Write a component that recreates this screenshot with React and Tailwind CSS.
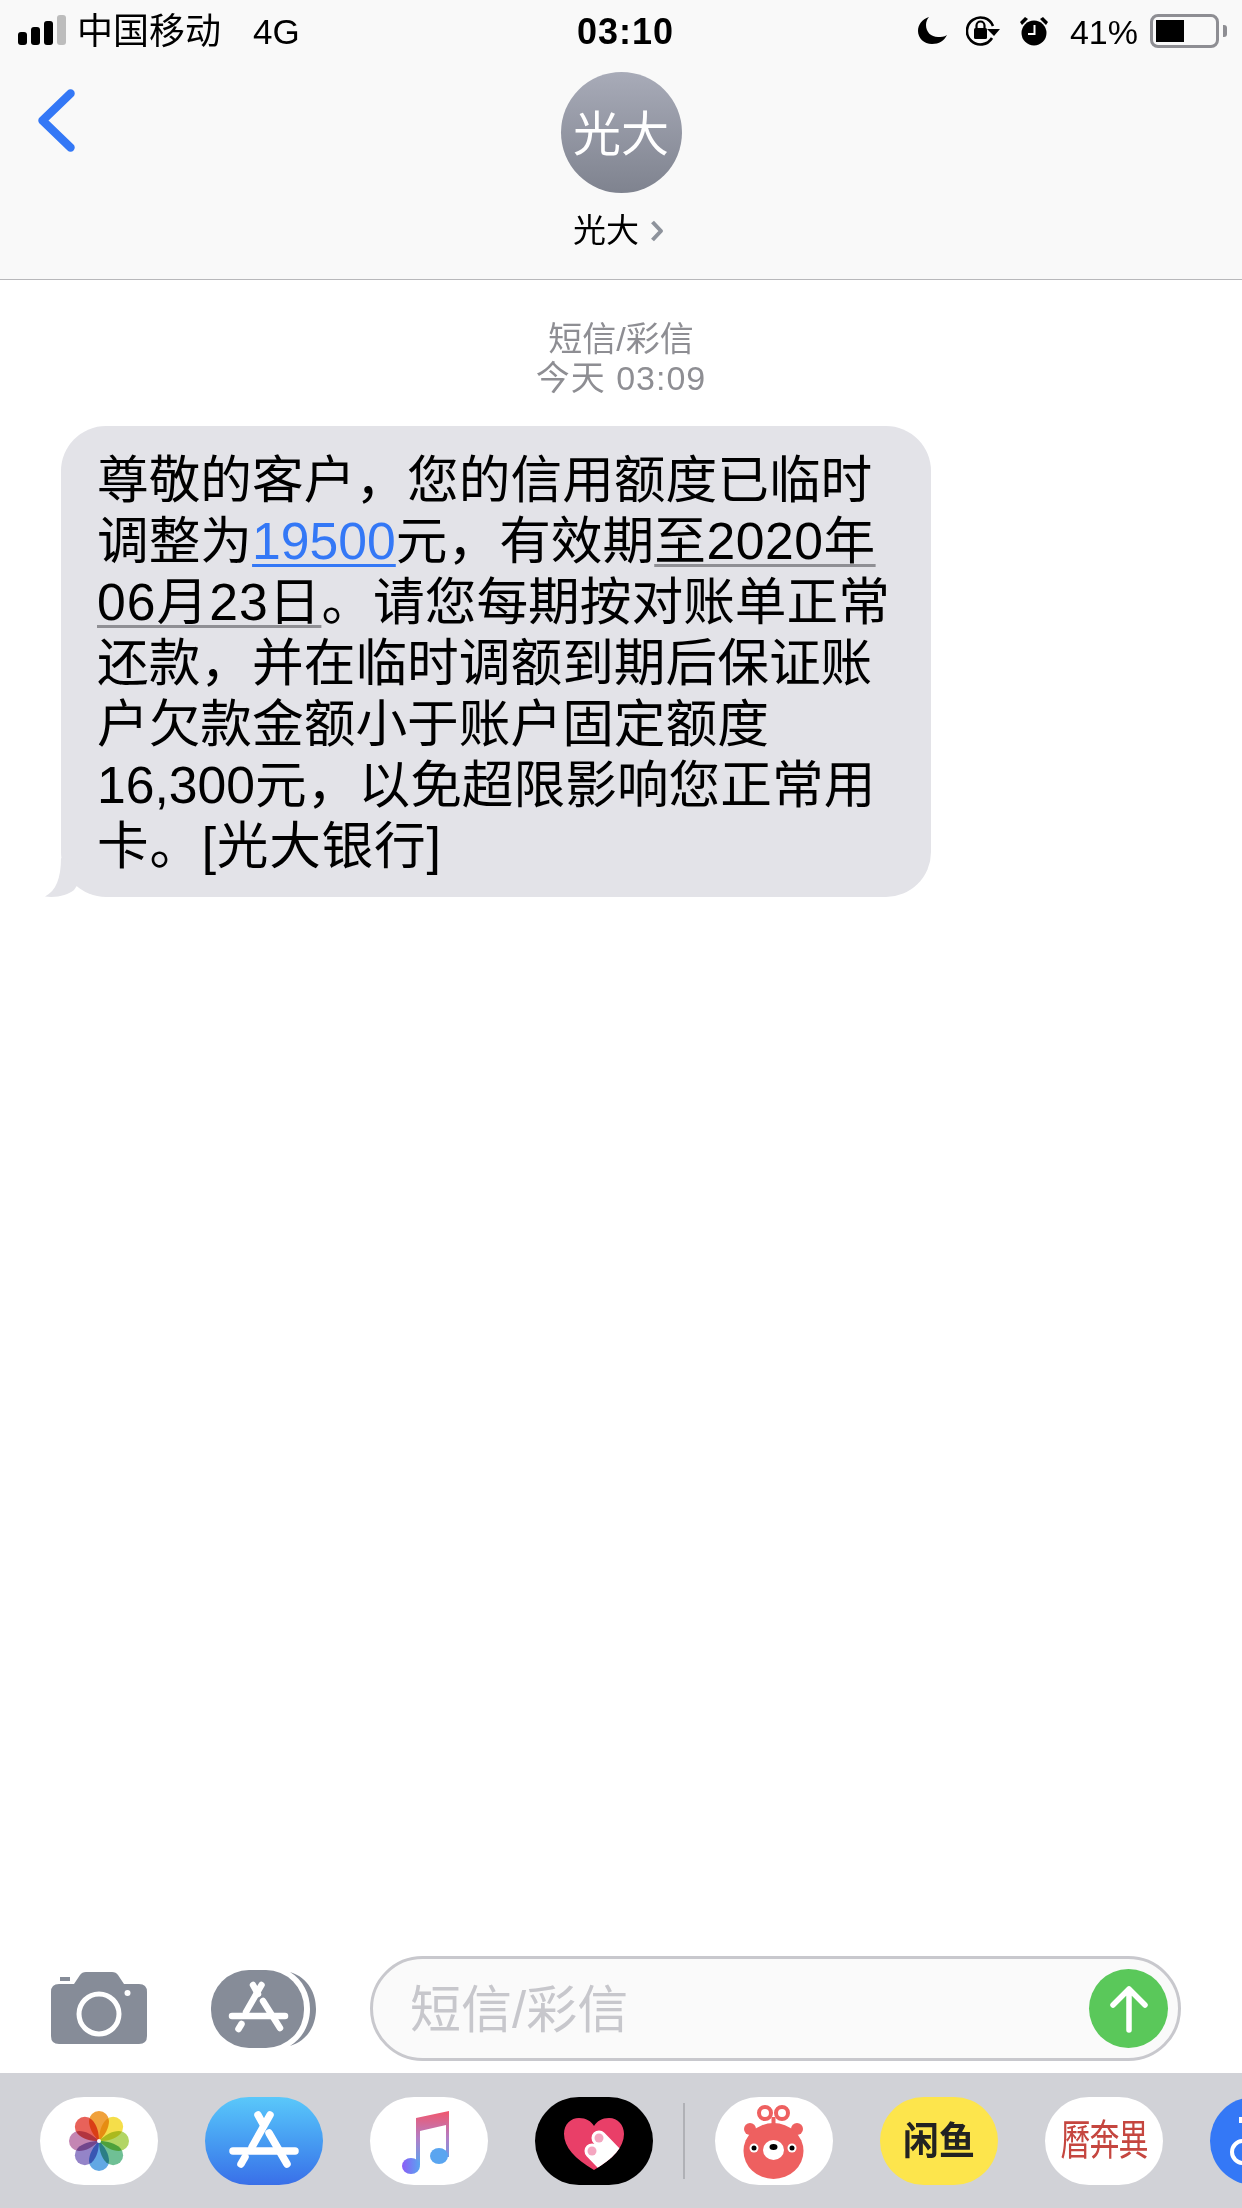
import React from "react";

const FONT = "font-['Liberation_Sans','Noto_Sans_CJK_SC',sans-serif]";
const UNDERLINE = "underline decoration-[3px] underline-offset-[5px]";

const SignalBars = () => (
  <div className="flex items-end gap-[4px] h-[30px]">
    <div className="w-[9px] h-[13px] rounded-[3px] bg-black" />
    <div className="w-[9px] h-[18px] rounded-[3px] bg-black" />
    <div className="w-[9px] h-[24px] rounded-[3px] bg-black" />
    <div className="w-[9px] h-[30px] rounded-[3px] bg-[#bdbdbd]" />
  </div>
);

const MoonIcon = () => (
  <svg width="29" height="27" viewBox="0 0 29 27">
    <path d="M11 0 C4 2 0 8 0 14 C0 21 6 27 14 27 C21 27 26 24 29 18 C26 20 23 20 20 20 C13 20 8 15 8 8 C8 5 9 2 11 0 Z" fill="#000" />
  </svg>
);

const RotationLockIcon = () => (
  <svg width="34" height="30" viewBox="0 0 34 30">
    <path d="M26 22 A13.5 13.5 0 1 1 27 10" fill="none" stroke="#000" strokeWidth="2.6" />
    <path d="M21 13 H34 L28 20 Z" fill="#000" />
    <rect x="8" y="12" width="13" height="11" rx="1.5" fill="#000" />
    <path d="M10.5 12 V9.5 A4 4 0 0 1 18.5 9.5 V12" fill="none" stroke="#000" strokeWidth="2.2" />
  </svg>
);

const AlarmIcon = () => (
  <svg width="30" height="30" viewBox="0 0 30 30">
    <circle cx="15" cy="17" r="12.5" fill="#000" />
    <path d="M1 6 L6 1 L9 3 L3 9 Z M29 6 L24 1 L21 3 L27 9 Z" fill="#000" />
    <path d="M15.5 9 V18 H9" fill="none" stroke="#fff" strokeWidth="2" />
  </svg>
);

const Battery = () => (
  <div className="flex items-center">
    <div className="w-[69px] h-[34px] rounded-[8px] border-[3px] border-[#8e8e93] p-[3px]">
      <div className="w-[28px] h-full bg-black" />
    </div>
    <div className="w-[4px] h-[12px] ml-[4px] rounded-r-[3px] bg-[#8e8e93]" />
  </div>
);

const StatusBar = () => (
  <div className="grid grid-cols-[577px_98px_1fr] items-center h-[60px] text-black">
    <div className="flex items-center pl-[18px]">
      <SignalBars />
      <span className="ml-[11px] pt-[3px] text-[36px] leading-[40px]">中国移动</span>
      <span className="ml-[32px] pt-[3px] text-[35px] leading-[40px]">4G</span>
    </div>
    <div className="pt-[3px] text-[36px] leading-[40px] font-bold tracking-[1px] whitespace-nowrap">03:10</div>
    <div className="flex items-center justify-end pt-[1px] pr-[15px]">
      <MoonIcon />
      <div className="ml-[19px] flex"><RotationLockIcon /></div>
      <div className="ml-[19px] flex"><AlarmIcon /></div>
      <span className="ml-[21px] pt-[2px] text-[34px] leading-[40px]">41%</span>
      <div className="ml-[12px]"><Battery /></div>
    </div>
  </div>
);

const Header = () => (
  <header className="h-[280px] bg-[#f9f9f9] border-b border-[#b8b8bb]">
    <StatusBar />
    <div className="grid grid-cols-[1fr_auto_1fr]">
      <svg className="mt-[29px] ml-[38px]" width="37" height="63" viewBox="0 0 37 63">
        <path d="M32.5 4.5 L4.5 31.5 L32.5 58.5" fill="none" stroke="#3478f6" strokeWidth="8.5" strokeLinecap="round" strokeLinejoin="round" />
      </svg>
      <div className="flex flex-col items-center pt-[12px]">
        <div className="w-[121px] h-[121px] pt-[4px] rounded-full bg-gradient-to-b from-[#a8abb8] to-[#7f838f] flex items-center justify-center text-white text-[48px] leading-none">
          光大
        </div>
        <div className="mt-[18px] mr-[5px] flex items-center text-[33px] leading-[40px] text-black">
          光大
          <svg className="ml-[11px]" width="14" height="22" viewBox="0 0 14 22">
            <path d="M2.5 2 L11 11 L2.5 20" fill="none" stroke="#8e939c" strokeWidth="4" strokeLinejoin="round" />
          </svg>
        </div>
      </div>
      <div />
    </div>
  </header>
);

const MessageBubble = () => (
  <div className="relative ml-[61px] w-[870px] rounded-[45px] bg-[#e3e3e8] pt-[24px] pb-[20px] pl-[36px] text-[51.7px] leading-[61px] text-black whitespace-nowrap">
    <svg className="absolute left-[-16px] bottom-[-1px]" width="50" height="40" viewBox="0 0 50 40">
      <path d="M16 0 C16 20 11 33 0 38.5 C12 40 23 37 29 32 L44 10 Z" fill="#e3e3e8" />
    </svg>
    <div className="relative">尊敬的客户，您的信用额度已临时</div>
    <div className="relative">
      调整为
      <span className={`text-[#3478f6] decoration-[#3478f6] ${UNDERLINE}`}>19500</span>
      元，有效期
      <span className={`tracking-[0.5px] decoration-[#8f8f94] ${UNDERLINE}`}>至2020年</span>
    </div>
    <div className="relative">
      <span className={`tracking-[1px] decoration-[#8f8f94] ${UNDERLINE}`}>06月23日</span>
      。请您每期按对账单正常
    </div>
    <div className="relative">还款，并在临时调额到期后保证账</div>
    <div className="relative">户欠款金额小于账户固定额度</div>
    <div className="relative">16,300元，以免超限影响您正常用</div>
    <div className="relative tracking-[0.7px]">卡。[光大银行]</div>
  </div>
);

const Conversation = () => (
  <main className="flex-1 pt-[40px] bg-white">
    <div className="mb-[28px] text-center text-[34px] leading-[39px] text-[#8e8e93]">
      <div>短信/彩信</div>
      <div className="tracking-[1px]">今天 03:09</div>
    </div>
    <MessageBubble />
  </main>
);

const CameraIcon = () => (
  <svg className="-mt-[2px]" width="96" height="72" viewBox="0 0 96 72">
    <path d="M8 12 H23 L29 3 Q31 0 35 0 H61 Q65 0 67 3 L73 12 H88 Q96 12 96 20 V64 Q96 72 88 72 H8 Q0 72 0 64 V20 Q0 12 8 12 Z" fill="#868c98" />
    <rect x="9" y="5" width="10" height="4" fill="#868c98" />
    <circle cx="48" cy="42" r="20" fill="none" stroke="#fff" strokeWidth="5" />
    <circle cx="76.5" cy="21" r="3" fill="#fff" />
  </svg>
);

const AppsIcon = () => (
  <svg width="105" height="78" viewBox="0 0 105 78">
    <rect x="0" y="0" width="93" height="78" rx="38" fill="#868c98" />
    <path d="M79 2 C98 8 105 24 105 39 C105 54 98 70 79 76 C92 68 99 54 99 39 C99 24 92 10 79 2 Z" fill="#868c98" />
    <g fill="none" stroke="#fff" strokeWidth="6.5" strokeLinecap="round">
      <path d="M50.5 15 L35 42" />
      <path d="M30.5 54 L27.5 59" />
      <path d="M42 15 L47 24" />
      <path d="M52 31 L69 58" />
      <path d="M21 46 H74" />
    </g>
  </svg>
);

const SendButton = () => (
  <div className="w-[79px] h-[79px] rounded-full bg-[#5ac85a] flex items-center justify-center">
    <svg width="42" height="50" viewBox="0 0 42 50">
      <path d="M21 46 V5 M5 21 L21 5 L37 21" fill="none" stroke="#fff" strokeWidth="5.5" strokeLinecap="round" strokeLinejoin="round" />
    </svg>
  </div>
);

const Composer = () => (
  <div className="flex items-center h-[105px] mb-[12px] pl-[51px]">
    <CameraIcon />
    <div className="ml-[64px] flex"><AppsIcon /></div>
    <div className="ml-[54px] w-[811px] h-[105px] rounded-full border-[3px] border-[#c8c8cd] bg-[#fafafa] flex items-center justify-between pl-[37px] pr-[10px]">
      <span className="pt-[5px] text-[51px] leading-[60px] text-[#c7c7cc]">短信/彩信</span>
      <SendButton />
    </div>
  </div>
);

// Dock tiles share the same stretched squircle
const Tile = ({ className = "", children }) => (
  <div className={`shrink-0 w-[118px] h-[88px] rounded-[44px] overflow-hidden flex items-center justify-center ${className}`}>
    {children}
  </div>
);

const PETALS = [
  ["#f0a13c", 0],
  ["#f5de4a", 45],
  ["#b2d565", 90],
  ["#6fc095", 135],
  ["#62a8e4", 180],
  ["#9484c8", 225],
  ["#c486b3", 270],
  ["#e8625a", 315],
];

const PhotosGlyph = () => (
  <svg width="118" height="88" viewBox="0 0 118 88">
    <g transform="translate(59 44)">
      {PETALS.map(([color, angle]) => (
        <path
          key={angle}
          className="mix-blend-multiply"
          d="M0 0 C-6 -6 -10 -13 -10 -20 A10 10 0 0 1 10 -20 C10 -13 6 -6 0 0 Z"
          fill={color}
          transform={`rotate(${angle})`}
        />
      ))}
      <circle r="2" fill="#fff" />
    </g>
  </svg>
);

const AppStoreGlyph = () => (
  <svg width="118" height="88" viewBox="0 0 118 88">
    <g fill="none" stroke="#fff" strokeWidth="7.5" strokeLinecap="round">
      <path d="M65 18 L47 50" />
      <path d="M40 60 L36 67" />
      <path d="M53 18 L58 27" />
      <path d="M64 36 L82 67" />
      <path d="M28 54 H90" />
    </g>
  </svg>
);

const MusicGlyph = () => (
  <svg width="118" height="88" viewBox="0 0 118 88">
    <defs>
      <linearGradient id="musicFill" x1="0" y1="0" x2="0" y2="1">
        <stop offset="0" stopColor="#f2566c" />
        <stop offset="0.5" stopColor="#b27ec6" />
        <stop offset="1" stopColor="#5aa5f0" />
      </linearGradient>
      <linearGradient id="noteFill" x1="0" y1="0" x2="1" y2="0">
        <stop offset="0" stopColor="#8b5cf6" />
        <stop offset="1" stopColor="#5aa5f0" />
      </linearGradient>
    </defs>
    <path d="M46 21 L79 14 V60 H76 V28 L50 34 V68 H46 Z" fill="url(#musicFill)" />
    <ellipse cx="41" cy="69" rx="9" ry="8" fill="url(#noteFill)" />
    <ellipse cx="69" cy="59" rx="9" ry="8" fill="#5aa5f0" />
  </svg>
);

const HEART = "M59 73 C40 62 29 50 29 37 C29 27 36 21 44 21 C51 21 56 24 59 29 C62 24 67 21 74 21 C83 21 89 28 89 37 C89 50 78 62 59 73 Z";

const HeartGlyph = () => (
  <svg width="118" height="88" viewBox="0 0 118 88">
    <defs>
      <clipPath id="heartClip">
        <path d={HEART} />
      </clipPath>
    </defs>
    <path d={HEART} fill="#e93f68" />
    <g clipPath="url(#heartClip)" stroke="#fff" strokeWidth="15" strokeLinecap="round">
      <path d="M64 41 L94 72" />
      <path d="M57 54 L84 82" />
    </g>
    <circle cx="64" cy="41" r="4.5" fill="#f4a6c0" />
    <circle cx="57" cy="54" r="4.5" fill="#f4a6c0" />
  </svg>
);

const BearGlyph = () => (
  <svg width="118" height="88" viewBox="0 0 118 88">
    <circle cx="50" cy="16" r="6" fill="none" stroke="#ee6060" strokeWidth="4" />
    <circle cx="67" cy="16" r="6" fill="none" stroke="#ee6060" strokeWidth="4" />
    <path d="M58.5 20 V30" stroke="#ee6060" strokeWidth="4" />
    <circle cx="35" cy="32" r="6" fill="#ee6060" />
    <circle cx="82" cy="32" r="6" fill="#ee6060" />
    <ellipse cx="58.5" cy="54" rx="30" ry="28" fill="#ee6060" />
    <circle cx="39" cy="51" r="4.5" fill="#fff" />
    <circle cx="39" cy="51" r="2.5" fill="#000" />
    <circle cx="77" cy="51" r="4.5" fill="#fff" />
    <circle cx="77" cy="51" r="2.5" fill="#000" />
    <ellipse cx="58.5" cy="53" rx="10.5" ry="10" fill="#fff" />
    <ellipse cx="58.5" cy="50" rx="4" ry="3" fill="#000" />
  </svg>
);

const BlueGlyph = () => (
  <svg width="118" height="88" viewBox="0 0 118 88">
    <path d="M31 20 V26" stroke="#fff" strokeWidth="4" />
    <circle cx="33" cy="55" r="11" fill="none" stroke="#fff" strokeWidth="4" />
  </svg>
);

const Dock = () => (
  <div className="flex items-center h-[135px] pl-[40px] bg-[#d1d2d7] overflow-hidden">
    <div className="flex gap-[47px] shrink-0">
      <Tile className="bg-white"><PhotosGlyph /></Tile>
      <Tile className="bg-gradient-to-b from-[#5ac8fa] to-[#3a6fe8]"><AppStoreGlyph /></Tile>
      <Tile className="bg-white"><MusicGlyph /></Tile>
      <Tile className="bg-black"><HeartGlyph /></Tile>
    </div>
    <div className="shrink-0 w-[2px] h-[76px] mx-[30px] bg-[#b0b1b6]" />
    <div className="flex gap-[47px] shrink-0">
      <Tile className="bg-white"><BearGlyph /></Tile>
      <Tile className="bg-[#fde54c] text-[#222] text-[36px] font-bold">
        <span className="inline-block scale-y-[1.05]">闲鱼</span>
      </Tile>
      <Tile className="bg-white text-[#c5463f] text-[30px] tracking-[-1px]">
        <span className="inline-block scale-y-[1.4]">曆奔異</span>
      </Tile>
      <Tile className="bg-[#3478f6]"><BlueGlyph /></Tile>
    </div>
  </div>
);

export default function App() {
  return (
    <div className={`w-[1242px] h-[2208px] overflow-hidden flex flex-col bg-white ${FONT}`}>
      <Header />
      <Conversation />
      <Composer />
      <Dock />
    </div>
  );
}
